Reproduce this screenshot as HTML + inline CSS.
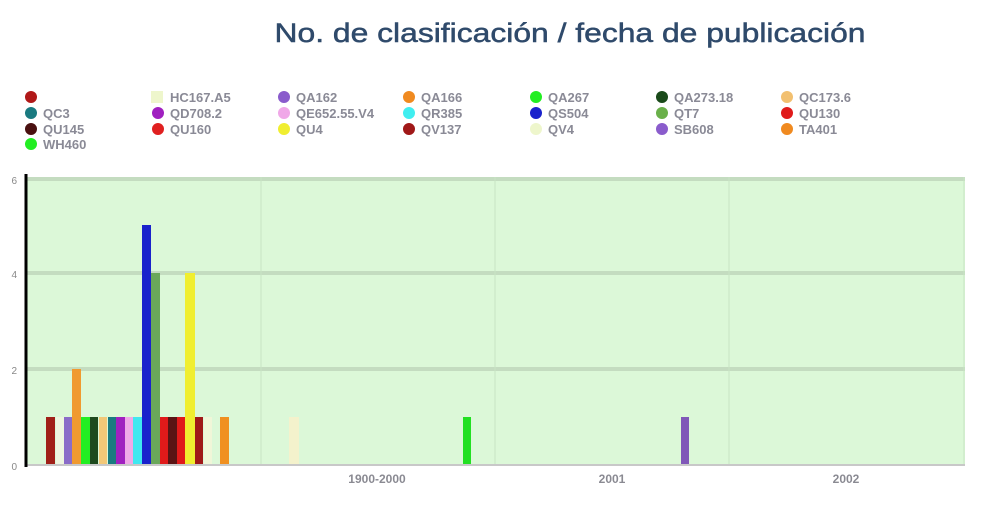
<!DOCTYPE html>
<html><head><meta charset="utf-8"><style>
html,body{margin:0;padding:0;background:#fff;width:988px;height:506px;overflow:hidden}
svg{display:block}
</style></head><body>
<svg width="988" height="506" xmlns="http://www.w3.org/2000/svg" font-family="Liberation Sans, sans-serif">
<rect width="988" height="506" fill="#fff"/>
<text x="570" y="42" text-anchor="middle" font-size="27" fill="#2f4a6b" stroke="#2f4a6b" stroke-width="0.5" textLength="591" lengthAdjust="spacingAndGlyphs">No. de clasificación / fecha de publicación</text>
<g font-size="13" font-weight="bold" fill="#8a8a96">
<circle cx="31" cy="97" r="6" fill="#b01818"/>
<rect x="151" y="91" width="12" height="12" fill="#eef6cc"/><text x="170" y="102">HC167.A5</text>
<circle cx="284" cy="97" r="6" fill="#8a5ccc"/><text x="296" y="102">QA162</text>
<circle cx="409" cy="97" r="6" fill="#f08a20"/><text x="421" y="102">QA166</text>
<circle cx="536" cy="97" r="6" fill="#22ee22"/><text x="548" y="102">QA267</text>
<circle cx="662" cy="97" r="6" fill="#1a4a1a"/><text x="674" y="102">QA273.18</text>
<circle cx="787" cy="97" r="6" fill="#f2c070"/><text x="799" y="102">QC173.6</text>

<circle cx="31" cy="113" r="6" fill="#1a7a80"/><text x="43" y="118">QC3</text>
<circle cx="158" cy="113" r="6" fill="#a020c0"/><text x="170" y="118">QD708.2</text>
<circle cx="284" cy="113" r="6" fill="#f0a8e8"/><text x="296" y="118">QE652.55.V4</text>
<circle cx="409" cy="113" r="6" fill="#40eef0"/><text x="421" y="118">QR385</text>
<circle cx="536" cy="113" r="6" fill="#1a22cc"/><text x="548" y="118">QS504</text>
<circle cx="662" cy="113" r="6" fill="#6ab04a"/><text x="674" y="118">QT7</text>
<circle cx="787" cy="113" r="6" fill="#e01a1a"/><text x="799" y="118">QU130</text>

<circle cx="31" cy="129" r="6" fill="#4a1010"/><text x="43" y="134">QU145</text>
<circle cx="158" cy="129" r="6" fill="#e02020"/><text x="170" y="134">QU160</text>
<circle cx="284" cy="129" r="6" fill="#f0ee30"/><text x="296" y="134">QU4</text>
<circle cx="409" cy="129" r="6" fill="#a01818"/><text x="421" y="134">QV137</text>
<circle cx="536" cy="129" r="6" fill="#eef6cc"/><text x="548" y="134">QV4</text>
<circle cx="662" cy="129" r="6" fill="#8a5ccc"/><text x="674" y="134">SB608</text>
<circle cx="787" cy="129" r="6" fill="#f08a20"/><text x="799" y="134">TA401</text>

<circle cx="31" cy="144" r="6" fill="#22ee22"/><text x="43" y="149">WH460</text>
</g>
<rect x="26" y="177" width="939" height="288" fill="#dcf8d8"/>
<g stroke="#c4dcc0" stroke-width="4">
<line x1="26" y1="179" x2="965" y2="179"/>
<line x1="26" y1="273" x2="965" y2="273"/>
<line x1="26" y1="369" x2="965" y2="369"/>
</g>
<g stroke="#c8e4c4" stroke-width="1">
<line x1="261" y1="177" x2="261" y2="465"/>
<line x1="495" y1="177" x2="495" y2="465"/>
<line x1="729" y1="177" x2="729" y2="465"/>
<line x1="964" y1="177" x2="964" y2="465"/>
</g>
<g>
<rect x="46" y="417" width="9" height="48" fill="#a02018"/>
<rect x="56" y="417" width="8" height="48" fill="#eef6e0"/>
<rect x="64" y="417" width="8" height="48" fill="#8a6cc8"/>
<rect x="72" y="369" width="9" height="96" fill="#f09a30"/>
<rect x="81" y="417" width="9" height="48" fill="#22ee22"/>
<rect x="90" y="417" width="8" height="48" fill="#1e4a1e"/>
<rect x="99" y="417" width="8" height="48" fill="#f2c878"/>
<rect x="108" y="417" width="8" height="48" fill="#1a7a80"/>
<rect x="116" y="417" width="9" height="48" fill="#a020c0"/>
<rect x="125" y="417" width="8" height="48" fill="#f0a8e8"/>
<rect x="133" y="417" width="9" height="48" fill="#40e8f0"/>
<rect x="142" y="225" width="9" height="240" fill="#1a22cc"/>
<rect x="151" y="273" width="9" height="192" fill="#6aa85a"/>
<rect x="160" y="417" width="8" height="48" fill="#e01a1a"/>
<rect x="168" y="417" width="9" height="48" fill="#5a1414"/>
<rect x="177" y="417" width="8" height="48" fill="#e01a1a"/>
<rect x="185" y="273" width="10" height="192" fill="#f0ee30"/>
<rect x="195" y="417" width="8" height="48" fill="#a01818"/>
<rect x="204" y="417" width="8" height="48" fill="#f0f6d8"/>
<rect x="220" y="417" width="9" height="48" fill="#f09020"/>
<rect x="289" y="417" width="10" height="48" fill="#f4f2cc"/>
<rect x="463" y="417" width="8" height="48" fill="#22e022"/>
<rect x="681" y="417" width="8" height="48" fill="#8058b8"/>
</g>
<line x1="26" y1="465" x2="965" y2="465" stroke="#c8c8c8" stroke-width="2"/>
<line x1="26" y1="174" x2="26" y2="467" stroke="#000" stroke-width="3"/>
<g font-size="10" fill="#888" text-anchor="end">
<text x="17" y="184">6</text><text x="17" y="278">4</text><text x="17" y="374">2</text><text x="17" y="470">0</text>
</g>
<g font-size="12" font-weight="bold" fill="#8a8a92" text-anchor="middle">
<text x="377" y="483">1900-2000</text><text x="612" y="483">2001</text><text x="846" y="483">2002</text>
</g>
</svg>
</body></html>
